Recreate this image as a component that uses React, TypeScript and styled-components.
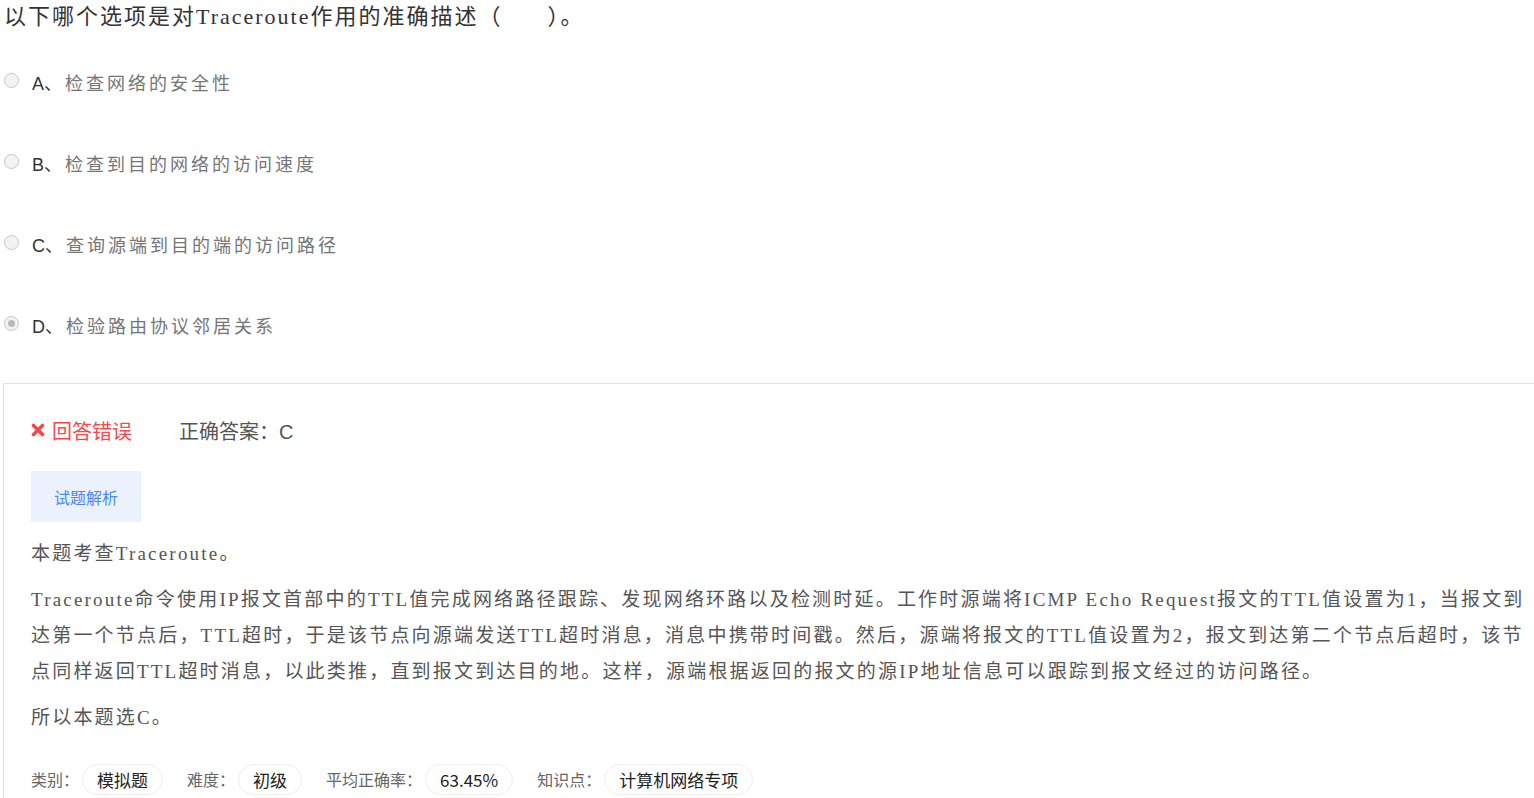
import React from 'react';
import styled, { createGlobalStyle } from 'styled-components';

const GlobalStyle = createGlobalStyle`
  body {
    margin: 0;
    background: #fff;
    overflow: hidden;
  }
`;

const serif = `"Liberation Serif", "Noto Sans CJK SC", serif`;
const sans = `"Liberation Sans", "Noto Sans CJK SC", sans-serif`;
const cjk = `"Noto Sans CJK SC", "Liberation Sans", sans-serif`;

interface Option {
  key: string;
  text: string;
  checked?: boolean;
}

const options: Option[] = [
  { key: 'A', text: '检查网络的安全性' },
  { key: 'B', text: '检查到目的网络的访问速度' },
  { key: 'C', text: '查询源端到目的端的访问路径' },
  { key: 'D', text: '检验路由协议邻居关系', checked: true },
];

const meta = [
  { label: '类别：', value: '模拟题' },
  { label: '难度：', value: '初级' },
  { label: '平均正确率：', value: '63.45%' },
  { label: '知识点：', value: '计算机网络专项' },
];

const Page = styled.div`
  padding-left: 3px;
  width: 1560px;
`;

const Question = styled.div`
  padding-left: 1px;
  font-family: ${serif};
  font-size: 22px;
  line-height: 34px;
  letter-spacing: 2px;
  color: #333;
`;

const OptionList = styled.div`
  display: flex;
  flex-direction: column;
  gap: 41px;
  margin-top: 28px;
  margin-bottom: 38px;
`;

const OptionRow = styled.label`
  display: flex;
  align-items: center;
  height: 40px;
  padding-left: 1px;
`;

const Radio = styled.input`
  appearance: none;
  box-sizing: border-box;
  width: 15px;
  height: 15px;
  margin: 0 13px 4px 0;
  border: 1px solid #c6c6c6;
  border-radius: 50%;
  background: #f3f3f3;
  position: relative;

  &:checked::after {
    content: '';
    position: absolute;
    left: 3px;
    top: 3px;
    width: 7px;
    height: 7px;
    border-radius: 50%;
    background: #b8b8b8;
  }
`;

const OptionKey = styled.span`
  font-family: ${sans};
  font-size: 18px;
  color: #333;
  margin-right: 3px;
`;

const OptionText = styled.span`
  font-family: ${serif};
  font-size: 18px;
  letter-spacing: 3px;
  color: #757575;
`;

const Panel = styled.div`
  border-top: 1px solid #e2e2e2;
  border-left: 1px solid #e2e2e2;
  padding: 28px 27px 0 27px;
  height: 420px;
`;

const StatusRow = styled.div`
  display: flex;
  align-items: center;
  height: 36px;
  font-family: ${sans};
  font-size: 20px;
`;

const Wrong = styled.span`
  display: flex;
  align-items: center;
  gap: 7px;
  color: #f5484a;
  margin-right: 47px;
`;

const Answer = styled.span`
  color: #555;
`;

const AnalysisButton = styled.button`
  margin-top: 23px;
  width: 110px;
  height: 51px;
  border: none;
  background: #ebf2fd;
  color: #4a88f2;
  font-family: ${sans};
  font-size: 16px;
  padding: 0;
`;

const Analysis = styled.div`
  width: 1500px;
  margin-top: 14px;
  font-family: ${serif};
  font-size: 19px;
  letter-spacing: 2.2px;
  line-height: 36px;
  color: #555;
`;

const Para = styled.p`
  margin: 0 0 10px 0;
`;

const MetaRow = styled.div`
  display: flex;
  align-items: center;
  margin-top: 28px;
  font-family: ${cjk};
`;

const MetaLabel = styled.span`
  font-size: 16px;
  line-height: 31px;
  color: #666;
  margin-right: 3px;
`;

const Tag = styled.span`
  box-sizing: border-box;
  height: 31px;
  line-height: 29px;
  padding: 0 14px;
  border: 1px solid #eee;
  border-radius: 16px;
  font-size: 17px;
  color: #222;
  margin-right: 24px;
`;

const CrossIcon = () => (
  <svg width="14" height="14" viewBox="0 0 14 14">
    <path d="M2.5 2.5 L11.5 11.5 M11.5 2.5 L2.5 11.5" stroke="#f5484a" strokeWidth="3.6" strokeLinecap="round" />
  </svg>
);

const App: React.FC = () => {
  return (
    <Page>
      <GlobalStyle />
      <Question>以下哪个选项是对Traceroute作用的准确描述（&nbsp;&nbsp;&nbsp;&nbsp;&nbsp;&nbsp;）。</Question>
      <OptionList>
        {options.map(o => (
          <OptionRow key={o.key}>
            <Radio type="radio" name="q" disabled defaultChecked={o.checked} />
            <OptionKey>{o.key}、</OptionKey>
            <OptionText>{o.text}</OptionText>
          </OptionRow>
        ))}
      </OptionList>
      <Panel>
        <StatusRow>
          <Wrong><CrossIcon />回答错误</Wrong>
          <Answer>正确答案：C</Answer>
        </StatusRow>
        <AnalysisButton>试题解析</AnalysisButton>
        <Analysis>
          <Para>本题考查Traceroute。</Para>
          <Para>
            Traceroute命令使用IP报文首部中的TTL值完成网络路径跟踪、发现网络环路以及检测时延。工作时源端将ICMP Echo Request报文的TTL值设置为1，当报文到达第一个节点后，TTL超时，于是该节点向源端发送TTL超时消息，消息中携带时间戳。然后，源端将报文的TTL值设置为2，报文到达第二个节点后超时，该节点同样返回TTL超时消息，以此类推，直到报文到达目的地。这样，源端根据返回的报文的源IP地址信息可以跟踪到报文经过的访问路径。
          </Para>
          <Para>所以本题选C。</Para>
        </Analysis>
        <MetaRow>
          {meta.map(m => (
            <React.Fragment key={m.label}>
              <MetaLabel>{m.label}</MetaLabel>
              <Tag>{m.value}</Tag>
            </React.Fragment>
          ))}
        </MetaRow>
      </Panel>
    </Page>
  );
};

export default App;
